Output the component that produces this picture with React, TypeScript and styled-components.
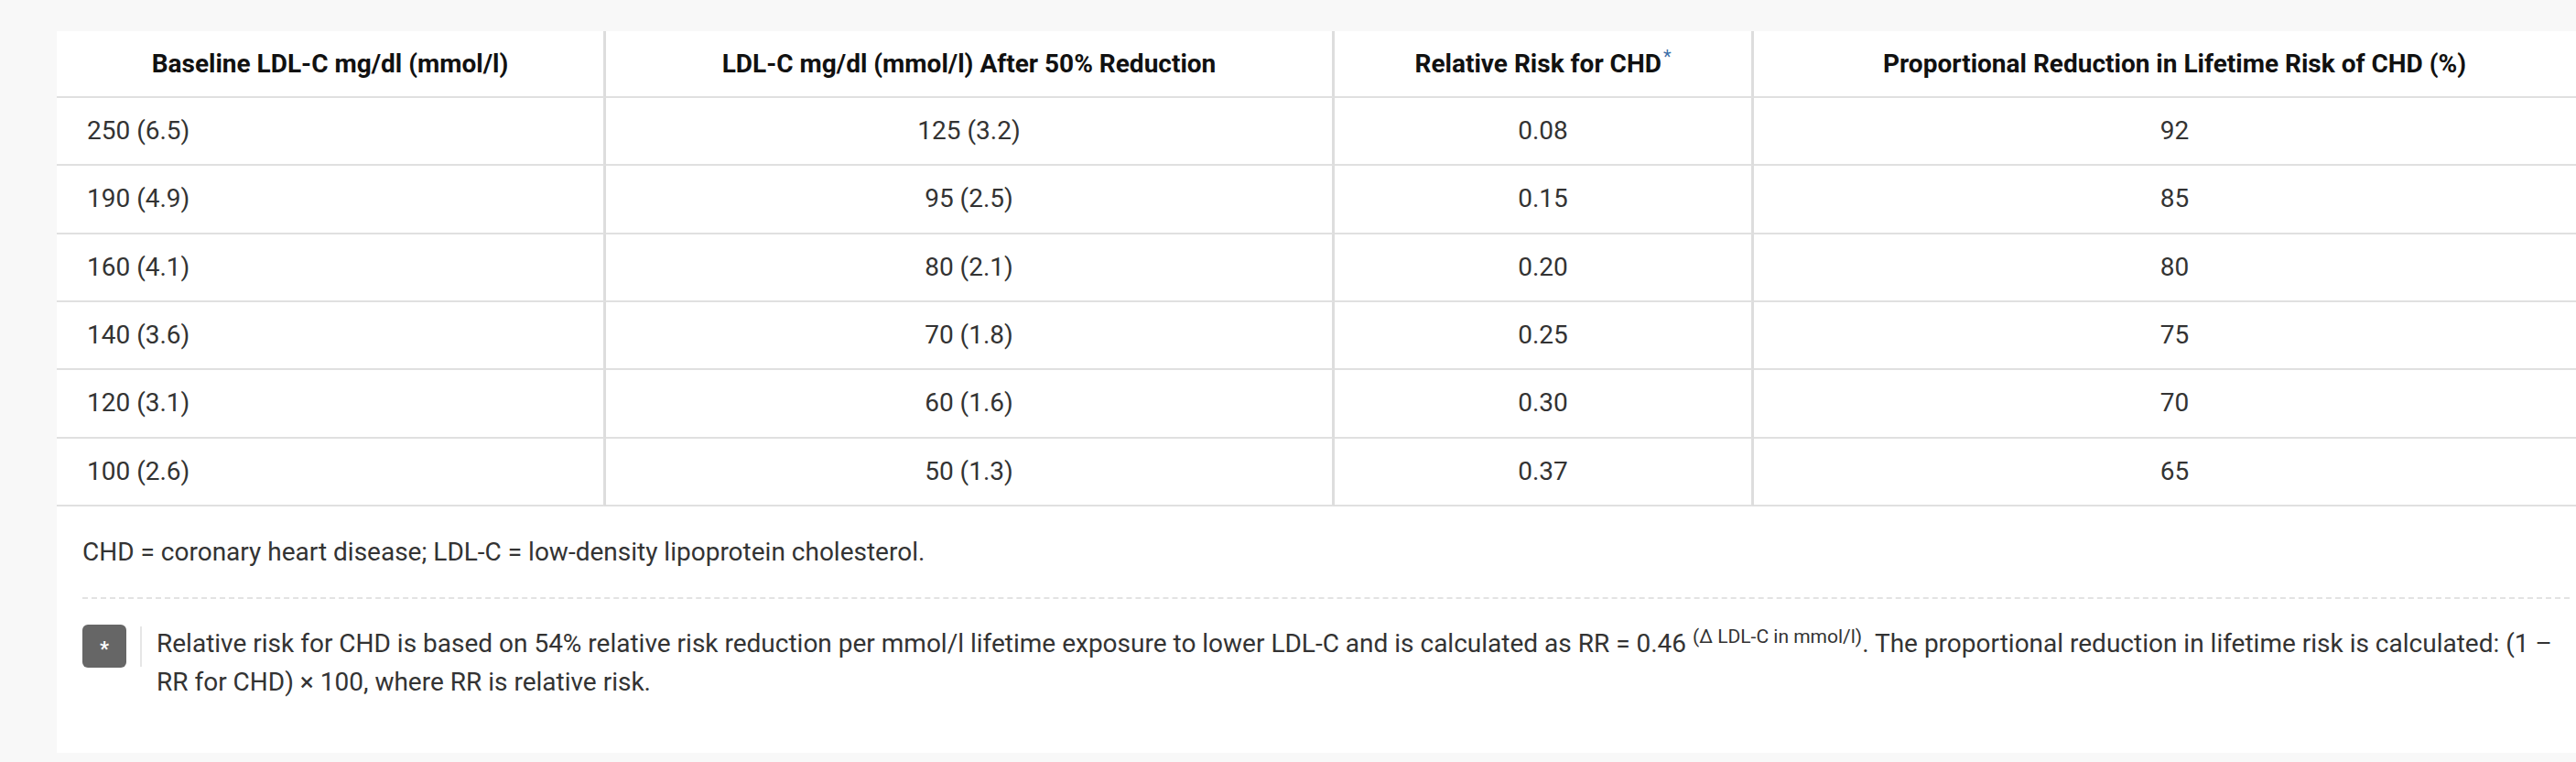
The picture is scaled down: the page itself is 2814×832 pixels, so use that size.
import styled, { createGlobalStyle } from 'styled-components';

const GlobalStyle = createGlobalStyle`
  html, body {
    margin: 0;
    padding: 0;
    overflow: hidden;
    background: #f8f8f8;
  }
  body {
    font-family: Roboto, "Liberation Sans", sans-serif;
  }
`;

const Page = styled.div`
  min-height: 832px;
  padding: 34px 0 0 62px;
  box-sizing: border-box;
`;

const Card = styled.section`
  width: 2773px;
  background: #ffffff;
  font-size: 28px;
  line-height: 42px;
  color: #333;
`;

const Table = styled.table`
  width: 100%;
  table-layout: fixed;
  border-collapse: separate;
  border-spacing: 0;
`;

const HeadCell = styled.th<{ $last?: boolean }>`
  padding: 15px 20px 14px;
  font-weight: 700;
  color: #111;
  text-align: center;
  border-bottom: 2px solid #e0e0e0;
  border-right: ${(p) => (p.$last ? 'none' : '3px solid #dddddd')};
  white-space: nowrap;
`;

const Cell = styled.td<{ $align?: 'left' | 'center'; $last?: boolean }>`
  padding: 15px 20px 15.35px ${(p) => (p.$align === 'left' ? '33px' : '20px')};
  text-align: ${(p) => p.$align ?? 'center'};
  border-bottom: 2px solid #e0e0e0;
  border-right: ${(p) => (p.$last ? 'none' : '3px solid #dddddd')};
`;

const Mark = styled.sup`
  color: #3d6fa8;
  font-size: 20px;
  font-weight: 400;
  line-height: 0;
  margin-left: 2px;
`;

const Footer = styled.div`
  padding: 29px 28px 56px;
`;

const Abbrev = styled.p`
  margin: 0;
  padding-bottom: 28px;
  border-bottom: 2px dashed #e3e3e3;
`;

const Note = styled.div`
  display: flex;
  align-items: flex-start;
  margin-top: 28px;
`;

const Badge = styled.span`
  flex: none;
  width: 48px;
  height: 47px;
  border-radius: 6px;
  background: #666;
  color: #fff;
  font-size: 22px;
  font-weight: 700;
  line-height: 1;
  display: flex;
  align-items: center;
  justify-content: center;
  padding-top: 6px;
  box-sizing: border-box;
`;

const Rule = styled.span`
  flex: none;
  width: 2px;
  height: 44px;
  margin: 2px 16px 0 15px;
  background: #e6e6e6;
`;

const NoteText = styled.p`
  margin: 0;
  flex: 1;
`;

const Exp = styled.sup`
  font-size: 21px;
  line-height: 0;
`;

const rows = [
  ['250 (6.5)', '125 (3.2)', '0.08', '92'],
  ['190 (4.9)', '95 (2.5)', '0.15', '85'],
  ['160 (4.1)', '80 (2.1)', '0.20', '80'],
  ['140 (3.6)', '70 (1.8)', '0.25', '75'],
  ['120 (3.1)', '60 (1.6)', '0.30', '70'],
  ['100 (2.6)', '50 (1.3)', '0.37', '65'],
];

export default function App() {
  return (
    <>
      <GlobalStyle />
      <Page>
        <Card>
          <Table>
            <colgroup>
              <col style={{ width: 600 }} />
              <col style={{ width: 796 }} />
              <col style={{ width: 458 }} />
              <col style={{ width: 919 }} />
            </colgroup>
            <thead>
              <tr>
                <HeadCell>Baseline LDL-C mg/dl (mmol/l)</HeadCell>
                <HeadCell>LDL-C mg/dl (mmol/l) After 50% Reduction</HeadCell>
                <HeadCell>
                  Relative Risk for CHD<Mark>*</Mark>
                </HeadCell>
                <HeadCell $last>Proportional Reduction in Lifetime Risk of CHD (%)</HeadCell>
              </tr>
            </thead>
            <tbody>
              {rows.map((r) => (
                <tr key={r[0]}>
                  <Cell $align="left">{r[0]}</Cell>
                  <Cell>{r[1]}</Cell>
                  <Cell>{r[2]}</Cell>
                  <Cell $last>{r[3]}</Cell>
                </tr>
              ))}
            </tbody>
          </Table>
          <Footer>
            <Abbrev>CHD = coronary heart disease; LDL-C = low-density lipoprotein cholesterol.</Abbrev>
            <Note>
              <Badge>*</Badge>
              <Rule />
              <NoteText>
                Relative risk for CHD is based on 54% relative risk reduction per mmol/l lifetime
                exposure to lower LDL-C and is calculated as RR = 0.46 <Exp>(Δ LDL-C in mmol/l)</Exp>.
                The proportional reduction in lifetime risk is calculated: (1 – RR for CHD) × 100,
                where RR is relative risk.
              </NoteText>
            </Note>
          </Footer>
        </Card>
      </Page>
    </>
  );
}
